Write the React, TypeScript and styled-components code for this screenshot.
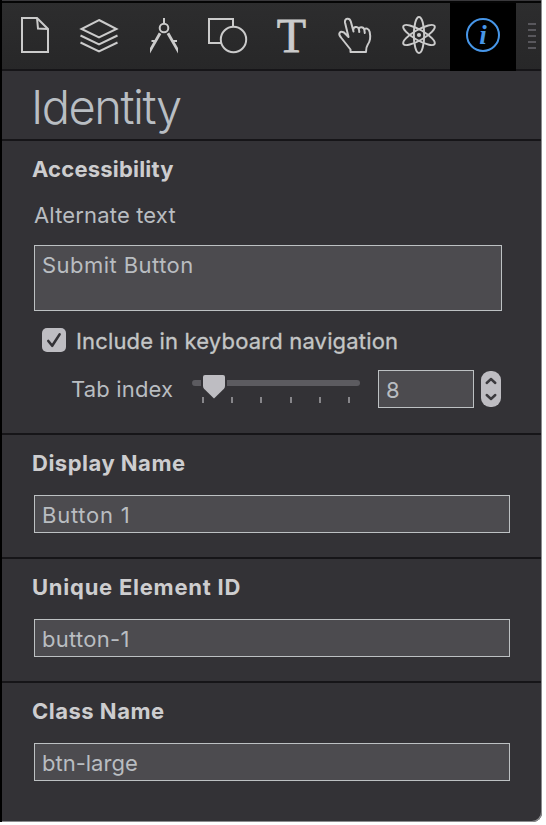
import React from "react";
import styled, { createGlobalStyle } from "styled-components";

const color = {
  panel: "#333236",
  field: "#4c4b4f",
  line: "#161518",
  fieldBorder: "#bdc1c3",
  text: "#b9bdc1",
  strong: "#cdcdcf",
  control: "#bebdc2",
  icon: "#cbcbcb",
  accent: "#4796e8",
};

const GlobalStyle = createGlobalStyle`
  *, *::before, *::after { box-sizing: border-box; }
  body {
    margin: 0;
    background: #fff;
    font-family: Inter, "Liberation Sans", Arial, sans-serif;
  }
`;

const Panel = styled.main`
  width: 542px;
  height: 822px;
  border: solid #000;
  border-width: 0 0 0 2px;
  border-bottom-right-radius: 9px;
  background: ${color.panel};
  box-shadow: inset -1px -1px 0 #8b8b8d;
  overflow: hidden;
`;

const Toolbar = styled.nav`
  display: flex;
  height: 71px;
  width: 539px;
  border-top: 1px solid #39383b;
  box-shadow: inset 0 2px 0 #050505, inset 0 -2px 0 ${color.line};
  background: linear-gradient(#2d2d2e, #272728);
`;

const Tab = styled.button<{ $active?: boolean }>`
  flex: none;
  width: ${(p) => (p.$active ? 66 : 64)}px;
  height: 68px;
  margin-top: 2px;
  padding: 0;
  border: 0;
  background: ${(p) => (p.$active ? "#000" : "transparent")};
`;

const Glyph = styled.svg<{ $accent?: boolean }>`
  display: block;
  fill: none;
  stroke: ${(p) => (p.$accent ? color.accent : color.icon)};
  stroke-width: 2;
`;

const GlyphText = styled.text<{ $size: number; $italic?: boolean }>`
  font-family: "Liberation Serif", serif;
  font-size: ${(p) => p.$size}px;
  font-weight: ${(p) => (p.$italic ? 700 : 400)};
  font-style: ${(p) => (p.$italic ? "italic" : "normal")};
  fill: ${(p) => (p.$italic ? color.accent : color.icon)};
  stroke-width: ${(p) => (p.$italic ? 0 : 0.8)};
  text-anchor: middle;
`;

const Grip = styled.div`
  display: grid;
  grid-auto-rows: 2px;
  gap: 4px;
  width: 8px;
  margin: 22px 0 0 12px;
  align-self: start;
`;

const GripLine = styled.i`
  background: #58575c;
`;

const Header = styled.header`
  height: 70px;
  border-bottom: 2px solid ${color.line};
  width: 539px;
  padding-left: 29px;
`;

const Title = styled.h1`
  margin: 0;
  font: 300 47px/71px Inter, "Liberation Sans", sans-serif;
  letter-spacing: -1.5px;
  color: #b9bec3;
`;

const Section = styled.section<{ $height: number }>`
  width: 539px;
  height: ${(p) => p.$height}px;
  padding: 13px 0 0 32px;
  border-bottom: 2px solid ${color.line};
  &:last-child { border-bottom: 0; }
`;

const Heading = styled.h2<{ $spacing: number }>`
  margin: 0 0 0 -2px;
  font-size: 22px;
  line-height: 30px;
  font-weight: 700;
  letter-spacing: ${(p) => p.$spacing}px;
  color: ${color.strong};
`;

const Label = styled.label<{ $spacing?: number; $strong?: boolean }>`
  font-size: 22px;
  line-height: 30px;
  letter-spacing: ${(p) => p.$spacing ?? 0.16}px;
  color: ${(p) => (p.$strong ? "#c4c6c6" : color.text)};
  -webkit-text-stroke: ${(p) => (p.$strong ? 0.3 : 0)}px currentColor;
  white-space: nowrap;
`;

const AltLabel = styled(Label)`
  display: block;
  margin-top: 16px;
`;

const Field = styled.input<{ $width?: number; $spacing?: number }>`
  display: block;
  width: ${(p) => p.$width ?? 476}px;
  height: 38px;
  margin: 0;
  padding: 2px 7px 0;
  border: 1px solid ${color.fieldBorder};
  border-radius: 0;
  outline: 0;
  background: ${color.field};
  color: ${color.text};
  font: 22px/30px Inter, "Liberation Sans", Arial, sans-serif;
  letter-spacing: ${(p) => p.$spacing ?? 0}px;
`;

const SectionField = styled(Field)`
  margin-top: 17px;
`;

const TextArea = styled.textarea`
  display: block;
  width: 468px;
  height: 66px;
  margin: 15px 0 0;
  padding: 4px 7px;
  border: 1px solid ${color.fieldBorder};
  border-radius: 0;
  outline: 0;
  resize: none;
  background: ${color.field};
  color: ${color.text};
  font: 22px/30px Inter, "Liberation Sans", Arial, sans-serif;
  letter-spacing: 0.45px;
`;

const CheckRow = styled.div`
  display: flex;
  align-items: center;
  gap: 10px;
  height: 30px;
  margin: 14px 0 0 8px;
`;

const CheckLabel = styled(Label)`
  padding-top: 2px;
`;

const CheckBox = styled.span`
  width: 24px;
  height: 24px;
  border-radius: 5px;
  background: ${color.control};
`;

const IndexRow = styled.div`
  display: flex;
  height: 38px;
  margin: 15px 0 0 37px;
`;

const IndexLabel = styled(Label)`
  width: 121px;
  margin-top: 4px;
`;

const Slider = styled.div`
  position: relative;
  width: 168px;
  height: 38px;
  margin-right: 18px;
  padding-top: 10px;
`;

const Track = styled.div`
  height: 6px;
  border-radius: 3px;
  background: #5c5b60;
`;

const Ticks = styled.div`
  display: flex;
  justify-content: space-between;
  width: 148px;
  margin: 11px 0 0 10px;
`;

const Tick = styled.i`
  width: 2px;
  height: 6px;
  background: #87868a;
`;

const Thumb = styled.svg`
  position: absolute;
  left: 9px;
  top: 4px;
`;

const Stepper = styled.div`
  width: 20px;
  height: 36px;
  margin: 1px 0 0 7px;
  border-radius: 9px;
  background: ${color.control};
`;

const tools = [
  {
    name: "Document",
    art: <><path d="M37 18H22V52H48V29Z" /><path d="M37 18L38 28.5L48 29" /></>,
  },
  {
    name: "Layers",
    art: <><path d="M99 20L116.5 29L99 37.5L81.5 29Z" /><path d="M80.5 35.5L99 44.5L117.5 35.5M80.5 42.5L99 51.5L117.5 42.5" /></>,
  },
  {
    name: "Layout",
    art: (
      <>
        <path d="M164 18V23" />
        <circle cx="164" cy="28" r="4.3" />
        <path d="M151.5 41H156M172 41H177" />
        <path d="M158.8 32.5L150 48V53.5L161.3 34ZM169.2 32.5L178 48V53.5L166.7 34Z" fill={color.icon} stroke="none" />
      </>
    ),
  },
  {
    name: "Shapes",
    art: <><path d="M221 43H209V19H233V27" /><circle cx="233.5" cy="39.5" r="12.7" /></>,
  },
  {
    name: "Text",
    art: <GlyphText x="291.5" y="51.7" $size={48}>T</GlyphText>,
  },
  {
    name: "Interaction",
    art: (
      <path
        strokeLinejoin="round"
        strokeLinecap="round"
        d="M348.5 37L345 22.5C344.3 18 349.5 17.5 350.8 21.5L353.5 31.5M353.2 30.5C352.8 26.5 358 25.8 358.8 29L359.3 32M358.8 29.5C359.2 26.2 363.5 26.5 364.3 29.5L364.8 33M364.3 30C365.3 27 369 28.5 369.7 32C370.7 37 370.5 41 367.8 44.5C366 47 366 49 366 52H350.5V49.5L341 37.5C337.5 33.5 340 30.5 344 32.5L348.5 37"
      />
    ),
  },
  {
    name: "Physics",
    art: (
      <>
        <ellipse cx="419" cy="35" rx="5.2" ry="18" />
        <ellipse cx="419" cy="35" rx="5.2" ry="18" transform="rotate(60 419 35)" />
        <ellipse cx="419" cy="35" rx="5.2" ry="18" transform="rotate(-60 419 35)" />
        <circle cx="419" cy="35" r="2.1" fill={color.icon} stroke="none" />
      </>
    ),
  },
];

export default function App() {
  return (
    <>
      <GlobalStyle />
      <Panel>
        <Toolbar>
          {tools.map((tool, i) => (
            <Tab key={tool.name} aria-label={tool.name}>
              <Glyph width="64" height="66" viewBox={`${2 + i * 64} 4 64 66`}>{tool.art}</Glyph>
            </Tab>
          ))}
          <Tab $active aria-label="Identity">
            <Glyph $accent width="66" height="66" viewBox="450 4 66 66">
              <circle cx="483" cy="35" r="16" />
              <GlyphText x="483" y="43.5" $size={27} $italic>i</GlyphText>
            </Glyph>
          </Tab>
          <Grip>
            {[0, 1, 2, 3, 4].map((n) => <GripLine key={n} />)}
          </Grip>
        </Toolbar>

        <Header><Title>Identity</Title></Header>

        <Section $height={294}>
          <Heading $spacing={0.2}>Accessibility</Heading>
          <AltLabel htmlFor="alt">Alternate text</AltLabel>
          <TextArea id="alt" defaultValue="Submit Button" spellCheck={false} />
          <CheckRow>
            <CheckBox>
              <svg width="24" height="24" fill="none" stroke={color.panel} strokeWidth="2.6" strokeLinecap="round" strokeLinejoin="round">
                <path d="M6.3 13L10.2 17.8L17.6 6.4" />
              </svg>
            </CheckBox>
            <CheckLabel $strong>Include in keyboard navigation</CheckLabel>
          </CheckRow>
          <IndexRow>
            <IndexLabel>Tab index</IndexLabel>
            <Slider>
              <Track />
              <Ticks>
                {[0, 1, 2, 3, 4, 5].map((n) => <Tick key={n} />)}
              </Ticks>
              <Thumb width="26" height="25">
                <path d="M0 4H26V14H0Z" fill={color.panel} />
                <path d="M4 1H22Q24 1 24 3V12Q24 13.5 23 14.7L13 24.5L3 14.7Q2 13.5 2 12V3Q2 1 4 1Z" fill={color.control} />
              </Thumb>
            </Slider>
            <Field $width={96} defaultValue="8" aria-label="Tab index" />
            <Stepper>
              <svg width="20" height="36" fill="none" stroke="#3b3a3e" strokeWidth="2.4" strokeLinecap="round" strokeLinejoin="round">
                <path d="M5.7 12L10 8L14.3 12M5.7 24L10 28L14.3 24" />
              </svg>
            </Stepper>
          </IndexRow>
        </Section>

        <Section $height={124}>
          <Heading $spacing={0.5}>Display Name</Heading>
          <SectionField $spacing={0.75} defaultValue="Button 1" aria-label="Display Name" />
        </Section>
        <Section $height={124}>
          <Heading $spacing={0.75}>Unique Element ID</Heading>
          <SectionField $spacing={0.3} defaultValue="button-1" aria-label="Unique Element ID" />
        </Section>
        <Section $height={138}>
          <Heading $spacing={0.5}>Class Name</Heading>
          <SectionField defaultValue="btn-large" aria-label="Class Name" />
        </Section>
      </Panel>
    </>
  );
}
